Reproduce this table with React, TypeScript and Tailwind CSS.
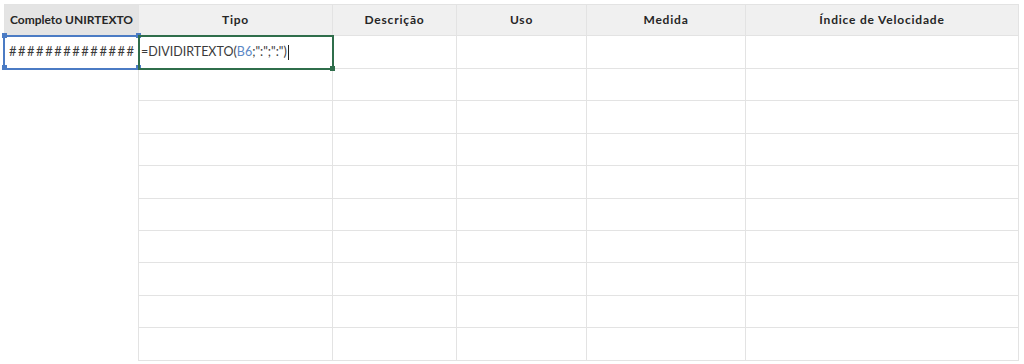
const headers = [
  "Completo UNIRTEXTO",
  "Tipo",
  "Descrição",
  "Uso",
  "Medida",
  "Índice de Velocidade",
];

const emptyRows = Array.from({ length: 9 });

function Handle({ className }: { className: string }) {
  return <span className={"absolute w-[5px] h-[5px] " + className} />;
}

export default function App() {
  return (
    <div className="w-[1024px] h-[364px] bg-white pt-[4px] pl-[4px] font-['Lato','Open_Sans',sans-serif] text-[#333]">
      <div className="grid grid-cols-[135px_194px_124px_130px_159px_273px] grid-rows-[32px_33px_repeat(9,32.4px)]">
        {headers.map((h, i) => (
          <div
            key={h}
            className={
              "flex items-center justify-center border-t border-r border-b border-[#e3e3e3] font-bold text-[12px] text-[#262626] " +
              (i === 0
                ? "bg-[#e4e4e4] border-l"
                : "bg-[#f0f0f0] tracking-[0.8px]")
            }
          >
            {h}
          </div>
        ))}

        {/* selected row */}
        <div className="relative flex items-center border-r border-b border-[#e3e3e3] pl-[5px] text-[13px] tracking-[1.5px] text-[#3a3a3a] outline-2 -outline-offset-1 outline-[#4b7bc4]">
          ##############
          <Handle className="-left-[2px] -top-[3px] bg-[#4b7bc4]" />
          <Handle className="-right-[3px] -top-[3px] bg-[#4b7bc4]" />
          <Handle className="-left-[2px] -bottom-[2px] bg-[#4b7bc4]" />
          <Handle className="-right-[3px] -bottom-[2px] bg-[#4b7bc4]" />
        </div>
        <div className="relative flex items-center border-r border-b border-[#e3e3e3] pl-[2px] text-[12.5px] text-[#3a3a3a] outline-2 -outline-offset-1 outline-[#2f6e4b]">
          <span>
            =DIVIDIRTEXTO(<span className="text-[#5b88c6]">B6</span>;":";":")
          </span>
          <span className="ml-[1px] w-[1px] h-[15px] bg-[#222]" />
          <Handle className="-right-[3px] -bottom-[3px] bg-[#2f6e4b]" />
        </div>
        {headers.slice(2).map((h) => (
          <div key={h} className="border-r border-b border-[#e3e3e3]" />
        ))}

        {emptyRows.map((_, r) =>
          headers.map((h, i) => (
            <div
              key={r + h}
              className={
                i === 0
                  ? "border-r border-[#e3e3e3]"
                  : "border-r border-b border-[#e3e3e3]"
              }
            />
          ))
        )}
      </div>
    </div>
  );
}
